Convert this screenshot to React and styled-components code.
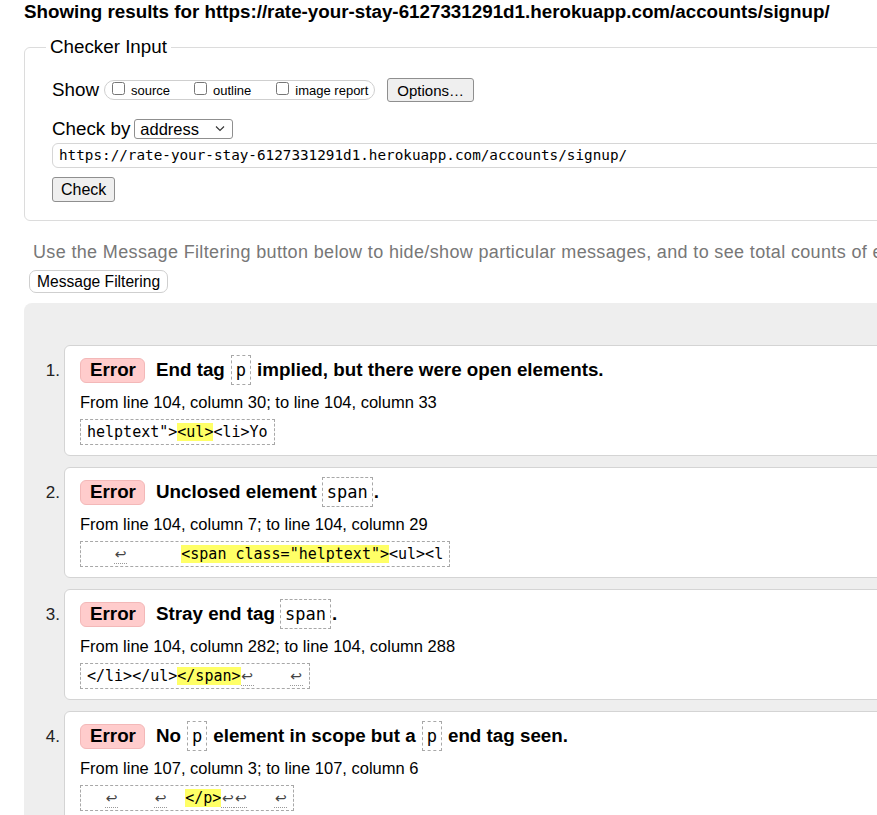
import React from "react";
import styled, { createGlobalStyle } from "styled-components";

const GlobalStyle = createGlobalStyle`
  html, body {
    margin: 0;
    padding: 0;
    overflow: hidden;
    background: #fff;
  }
  body {
    font-family: "Liberation Sans", Arial, sans-serif;
    color: #000;
  }
`;

const mono = `"DejaVu Sans Mono", "Liberation Mono", monospace`;

const Page = styled.div`
  width: 1100px;
  padding: 1px 0 0 24px;
`;

const Heading = styled.h2`
  margin: 0;
  font-size: 18.8px;
  line-height: 22px;
  font-weight: bold;
`;

const Fieldset = styled.fieldset`
  margin: 13px 0 0;
  padding: 0;
  border: 1px solid #dcdcdc;
  border-radius: 6px;
`;

const Legend = styled.legend`
  margin-left: 21px;
  padding: 0 4px;
  font-size: 18.8px;
  line-height: 22px;
`;

const FieldBody = styled.div`
  padding: 20px 27px 18px;
  display: flex;
  flex-direction: column;
  align-items: flex-start;
`;

const Row = styled.div`
  display: flex;
  align-items: center;
  height: ${(p) => p.h || 24}px;
  margin-top: ${(p) => p.mt || 0}px;
`;

const Label = styled.span`
  font-size: 18.8px;
  margin-right: ${(p) => p.gap || 5}px;
`;

const Pill = styled.div`
  display: flex;
  align-items: center;
  height: 18px;
  border: 1px solid #cfcfcf;
  border-radius: 10px;
  padding: 0 6px 0 7px;
  margin-right: 12px;
`;

const Opt = styled.label`
  display: flex;
  align-items: center;
  font-size: 13px;
  margin-right: ${(p) => p.mr || 0}px;
`;

const Box = styled.input`
  width: 13px;
  height: 13px;
  margin: 0 6px 4px 0;
`;

const Button = styled.button`
  font-family: "Liberation Sans", Arial, sans-serif;
  font-size: ${(p) => p.fs || 15}px;
  height: ${(p) => p.h || 24}px;
  padding: 0 ${(p) => p.px || 9}px;
  background: #efefef;
  border: 1px solid #8f8f8f;
  border-radius: 3px;
  color: #000;
`;

const SelectWrap = styled.span`
  position: relative;
  display: inline-block;
  width: 99px;
  height: 20px;
`;

const Select = styled.select`
  appearance: none;
  font-family: "Liberation Sans", Arial, sans-serif;
  font-size: 16.5px;
  width: 99px;
  height: 20px;
  padding: 0 0 0 5px;
  border: 1px solid #8f8f8f;
  border-radius: 3px;
  background: #fff;
  color: #000;
`;

const Chevron = styled.svg`
  position: absolute;
  right: 8px;
  top: 6px;
  pointer-events: none;
`;

const UrlInput = styled.div`
  width: 1000px;
  height: 23px;
  border: 1px solid #d6d6d6;
  border-radius: 6px;
  padding-left: 6px;
  font-family: ${mono};
  font-size: 14.3px;
  line-height: 23px;
  white-space: pre;
  margin-top: 4px;
`;

const Note = styled.p`
  margin: 21px 0 0 9px;
  font-size: 18px;
  letter-spacing: 0.35px;
  line-height: 20px;
  color: #777;
  white-space: nowrap;
`;

const FilterButton = styled.button`
  margin: 8px 0 0 5px;
  font-family: "Liberation Sans", Arial, sans-serif;
  font-size: 15.6px;
  height: 23px;
  padding: 0 7px;
  background: #fff;
  border: 1px solid #cfcfcf;
  border-radius: 7px;
  color: #000;
`;

const Results = styled.ol`
  list-style: none;
  margin: 10px 0 0;
  padding: 42px 0 0;
  background: #eee;
  border-top-left-radius: 8px;
  display: flex;
  flex-direction: column;
  gap: 11px;
`;

const Item = styled.li`
  display: flex;
  align-items: flex-start;
`;

const Num = styled.span`
  width: 36px;
  flex: none;
  padding-right: 4px;
  text-align: right;
  padding-top: 11px;
  line-height: 30px;
  font-size: 17px;
  color: #222;
`;

const Card = styled.div`
  flex: 1;
  background: #fff;
  border: 1px solid #d4d4d4;
  border-radius: 6px;
  padding: 9px 15px 10px;
`;

const Title = styled.div`
  display: flex;
  align-items: center;
  height: 30px;
  font-size: 18.8px;
  font-weight: bold;
  white-space: pre;
`;

const Badge = styled.span`
  display: inline-flex;
  align-items: center;
  height: 23px;
  padding: 0 8px 0 9px;
  background: #fcc;
  border: 1px solid #f3b8b8;
  border-radius: 6px;
  margin-right: 11px;
`;

const Code = styled.code`
  display: inline-block;
  font-family: ${mono};
  font-weight: normal;
  font-size: 17px;
  line-height: 28px;
  padding: 0 4px;
  border: 1px dashed #a8a8a8;
  margin: 0 ${(p) => p.mr || 0}px 0 ${(p) => p.ml || 0}px;
`;

const Location = styled.p`
  margin: 7px 0 0;
  font-size: 16.5px;
  line-height: 20px;
`;

const Extract = styled.div`
  display: inline-block;
  margin-top: 7px;
  height: 24px;
  padding: 0 6px;
  border: 1px dashed #a8a8a8;
  font-family: ${mono};
  font-size: 15px;
  line-height: 24px;
  white-space: pre;
`;

const Mark = styled.mark`
  background: #ff6;
  color: #000;
`;

const Lf = styled.span`
  display: inline-block;
  width: 13px;
  text-align: center;
  color: #444;
  font-family: "DejaVu Sans", sans-serif;
  font-size: 14px;
  line-height: 15px;
  padding-bottom: 1px;
  border-bottom: 1px dotted #999;
`;

const L = () => <Lf>↩</Lf>;

const messages = [
  {
    title: (
      <>
        End tag<Code ml={6} mr={6}>p</Code>implied, but there were open elements.
      </>
    ),
    loc: "From line 104, column 30; to line 104, column 33",
    extract: (
      <>
        helptext"&gt;<Mark>&lt;ul&gt;</Mark>&lt;li&gt;Yo
      </>
    ),
  },
  {
    title: (
      <>
        Unclosed element<Code ml={5} mr={1}>span</Code>.
      </>
    ),
    loc: "From line 104, column 7; to line 104, column 29",
    extract: (
      <>
        {"   "}
        <L />
        {"      "}
        <Mark>&lt;span class="helptext"&gt;</Mark>&lt;ul&gt;&lt;l
      </>
    ),
  },
  {
    title: (
      <>
        Stray end tag<Code ml={5} mr={1}>span</Code>.
      </>
    ),
    loc: "From line 104, column 282; to line 104, column 288",
    extract: (
      <>
        &lt;/li&gt;&lt;/ul&gt;<Mark>&lt;/span&gt;</Mark>
        <L />
        {"    "}
        <L />
      </>
    ),
  },
  {
    title: (
      <>
        No<Code ml={6} mr={6}>p</Code>element in scope but a<Code ml={6} mr={6}>p</Code>end tag seen.
      </>
    ),
    loc: "From line 107, column 3; to line 107, column 6",
    extract: (
      <>
        {"  "}
        <L />
        {"    "}
        <L />
        {"  "}
        <Mark>&lt;/p&gt;</Mark>
        <L />
        <L />
        {"   "}
        <L />
      </>
    ),
  },
];

export default function App() {
  const url = "https://rate-your-stay-6127331291d1.herokuapp.com/accounts/signup/";
  return (
    <Page>
      <GlobalStyle />
      <Heading>Showing results for {url}</Heading>
      <Fieldset>
        <Legend>Checker Input</Legend>
        <FieldBody>
          <Row mt={0}>
            <Label>Show</Label>
            <Pill>
              <Opt mr={24}>
                <Box type="checkbox" />
                source
              </Opt>
              <Opt mr={25}>
                <Box type="checkbox" />
                outline
              </Opt>
              <Opt>
                <Box type="checkbox" />
                image report
              </Opt>
            </Pill>
            <Button px={9}>Options…</Button>
          </Row>
          <Row mt={17} h={20}>
            <Label gap={4}>Check by</Label>
            <SelectWrap>
              <Select defaultValue="address">
                <option value="address">address</option>
                <option value="file">file upload</option>
                <option value="text">text input</option>
              </Select>
              <Chevron width="10" height="7" viewBox="0 0 10 7">
                <path d="M1 1.5 L5 5.5 L9 1.5" fill="none" stroke="#333" strokeWidth="1.1" />
              </Chevron>
            </SelectWrap>
          </Row>
          <UrlInput>{url}</UrlInput>
          <Button fs={16} h={25} px={8} style={{ marginTop: 9 }}>
            Check
          </Button>
        </FieldBody>
      </Fieldset>
      <Note>
        Use the Message Filtering button below to hide/show particular messages, and to see total counts of errors and warnings.
      </Note>
      <FilterButton>Message Filtering</FilterButton>
      <Results>
        {messages.map((m, i) => (
          <Item key={i}>
            <Num>{i + 1}.</Num>
            <Card>
              <Title>
                <Badge>Error</Badge>
                {m.title}
              </Title>
              <Location>{m.loc}</Location>
              <Extract>{m.extract}</Extract>
            </Card>
          </Item>
        ))}
      </Results>
    </Page>
  );
}
